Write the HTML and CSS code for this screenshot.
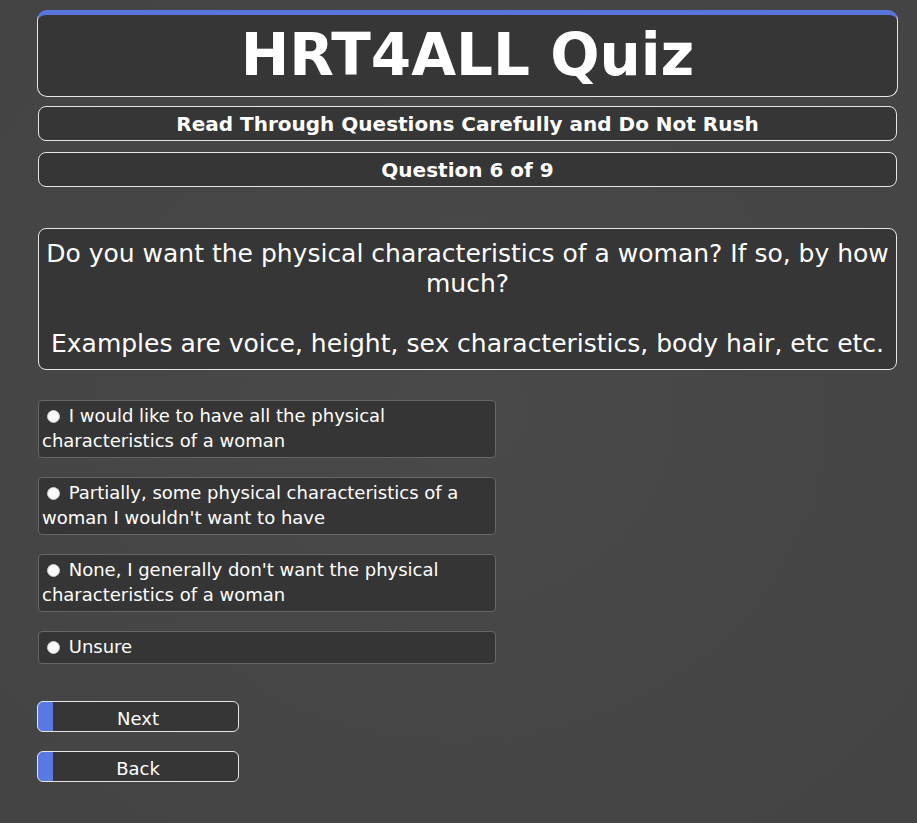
FILE: index.html
```html
<!DOCTYPE html>
<html lang="en">
<head>
    <meta charset="UTF-8">
    <meta name="viewport" content="width=device-width, initial-scale=1.0">
    <title>HRT4ALL Quiz</title>
    <link rel="stylesheet" href="styles.css">
</head>
<body>
    <div class="quiz">
        <div class="quiz-header">
            <h1 class="quiz-title">HRT4ALL Quiz</h1>
        </div>
        <div class="info-box">Read Through Questions Carefully and Do Not Rush</div>
        <div class="info-box">Question 6 of 9</div>

        <div class="question">
            Do you want the physical characteristics of a woman? If so, by how much?<br><br>
            Examples are voice, height, sex characteristics, body hair, etc etc.
        </div>

        <div class="options">
            <label class="option"><input type="radio" name="answer" value="1"> I would like to have all the physical characteristics of a woman</label>
            <label class="option"><input type="radio" name="answer" value="2"> Partially, some physical characteristics of a woman I wouldn't want to have</label>
            <label class="option"><input type="radio" name="answer" value="3"> None, I generally don't want the physical characteristics of a woman</label>
            <label class="option"><input type="radio" name="answer" value="4"> Unsure</label>
        </div>

        <div class="nav">
            <button class="nav-btn">Next</button>
            <button class="nav-btn">Back</button>
        </div>
    </div>
</body>
</html>
```

FILE: styles.css
```css
body {
    margin: 0;
    min-height: 100vh;
    background: radial-gradient(ellipse at center, #494949 0%, #464646 55%, #444444 100%);
    font-family: "DejaVu Sans", sans-serif;
    color: white;
}

.quiz {
    width: 861px;
    padding: 10px 0 30px 37px;
}

.quiz-header {
    background: #363636;
    border: 1px solid #e6e6e6;
    border-top: 5px solid #5775dc;
    border-radius: 10px;
    height: 81px;
    display: flex;
    align-items: center;
    justify-content: center;
}

.quiz-title {
    margin: 0;
    font-size: 58px;
    font-weight: bold;
    line-height: 1;
    padding-bottom: 1px;
}

.info-box {
    margin: 9px 1px 0;
    height: 33px;
    background: #363636;
    border: 1px solid #e6e6e6;
    border-radius: 8px;
    font-size: 20px;
    font-weight: bold;
    display: flex;
    align-items: center;
    justify-content: center;
}

.info-box + .info-box {
    margin-top: 11px;
}

.question {
    margin: 41px 1px 0;
    padding: 10px 3px;
    background: #363636;
    border: 1px solid #e6e6e6;
    border-radius: 8px;
    font-size: 25px;
    line-height: 30px;
    text-align: center;
}

.options {
    margin-top: 30px;
    display: flex;
    flex-direction: column;
    gap: 19px;
}

.option {
    width: 450px;
    margin-left: 1px;
    padding: 2px 3px 4px;
    background: #353535;
    border: 1px solid #666;
    border-radius: 4px;
    font-size: 18px;
    line-height: 25px;
}

.option input {
    appearance: none;
    width: 13px;
    height: 13px;
    margin: 0 3px 0 5px;
    background: #fafafa;
    border: 1px solid #c8c8c8;
    border-radius: 50%;
    vertical-align: -1px;
}

.nav {
    margin-top: 37px;
    display: flex;
    flex-direction: column;
    gap: 19px;
}

.nav-btn {
    width: 202px;
    height: 31px;
    background: linear-gradient(to right, #5a78e2 15px, #363636 15px);
    border: 1px solid #e6e6e6;
    border-radius: 6px;
    color: white;
    font-family: "DejaVu Sans", sans-serif;
    font-size: 18px;
    padding: 3px 0 0;
    cursor: pointer;
}
```
